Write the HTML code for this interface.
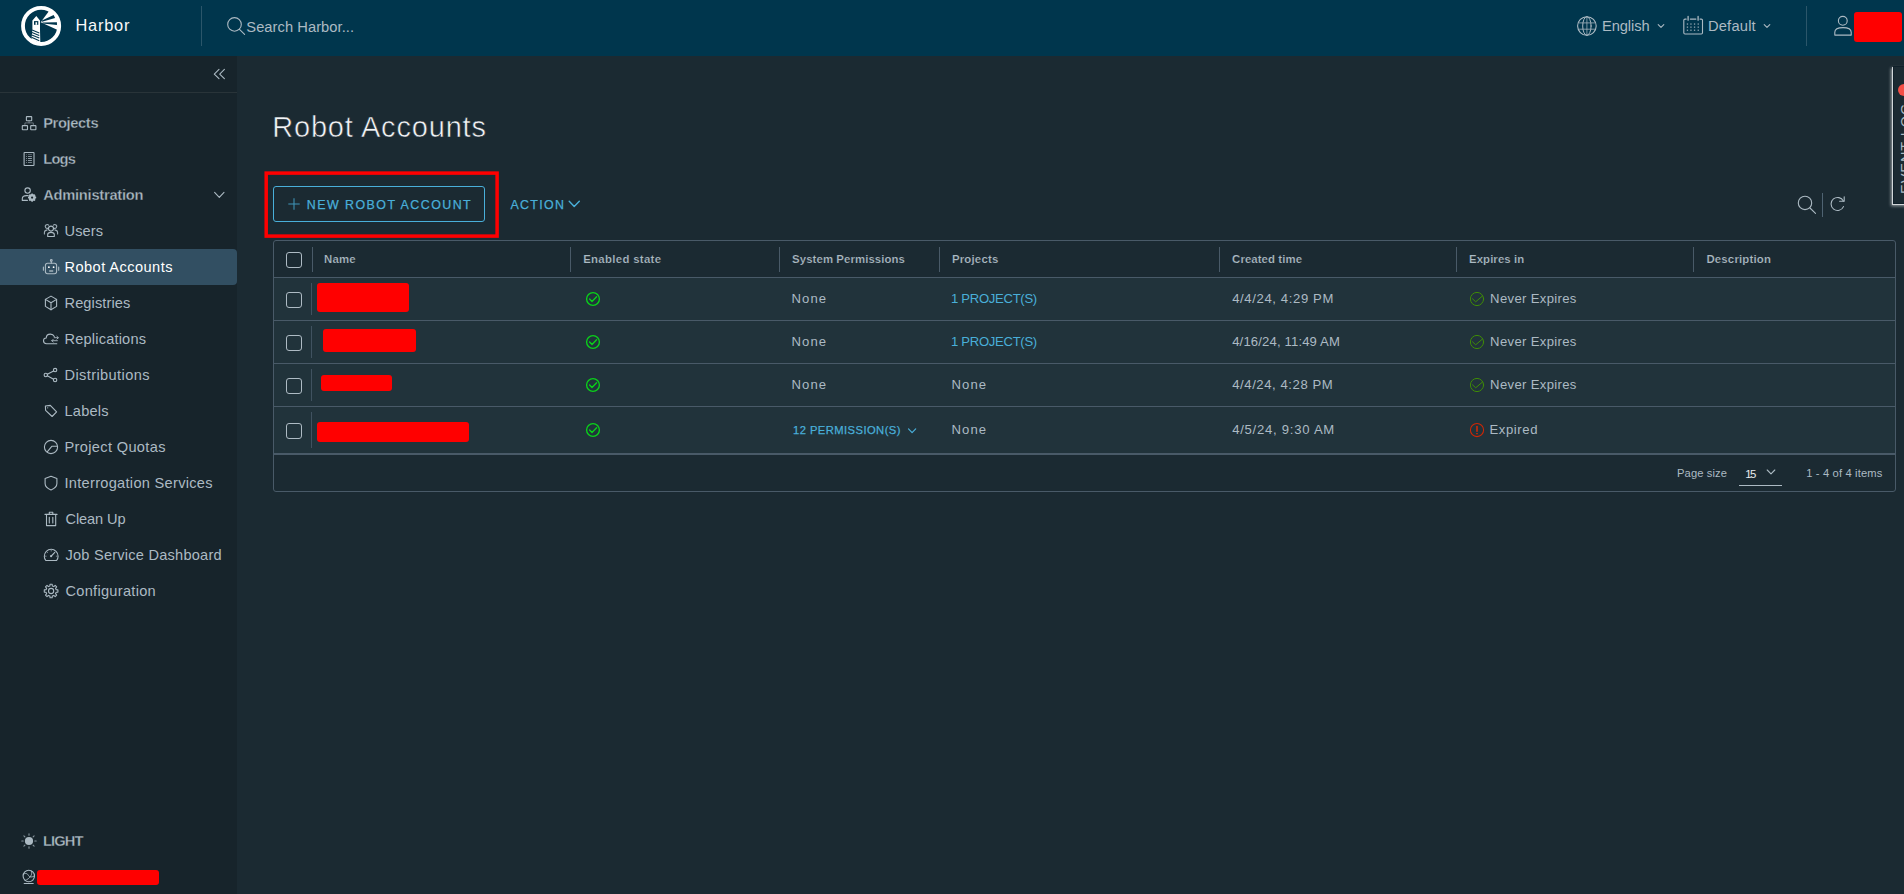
<!DOCTYPE html>
<html lang="en">
<head>
<meta charset="utf-8">
<title>Harbor - Robot Accounts</title>
<style>
*{box-sizing:border-box;margin:0;padding:0}
html,body{width:1904px;height:894px;overflow:hidden;background:#1b2a32;font-family:"Liberation Sans",sans-serif;color:#acbac3}
.abs{position:absolute}
.t{position:absolute;white-space:nowrap;line-height:1}
#header{position:absolute;left:0;top:0;width:1904px;height:56px;background:#00364d}
#sidebar{position:absolute;left:0;top:56px;width:237px;height:838px;background:#17242b}
#main{position:absolute;left:237px;top:56px;width:1667px;height:838px;background:#1b2a32}
svg{position:absolute;overflow:visible}
.red{position:absolute;background:#ff0000;border-radius:3px}
.cb{position:absolute;width:16px;height:16px;border:1px solid #aebbc4;border-radius:3px;background:transparent}
.sep{position:absolute;width:1px;background:#495a68}
.rs{background:#405260}
#title{-webkit-text-stroke:.55px #1b2a32}
#nv1,#nv2,#nv3,#light{-webkit-text-stroke:.3px #17242b}
#th1,#th2,#th3,#th4,#th5,#th6,#th7{-webkit-text-stroke:.2px #1b2a32}
#btntext,#action,#r4a{-webkit-text-stroke:.25px #49afd9}
.hl{position:absolute;height:1px;background:#495a68;left:274px;width:1621px}
.i{fill:none;stroke:#acbac3;stroke-width:1.1;stroke-linecap:round;stroke-linejoin:round}
</style>
</head>
<body>
<div id="header"></div>
<div id="sidebar"></div>
<div id="main"></div>

<!-- header pieces -->
<div class="abs" style="left:201px;top:6px;width:1px;height:40px;background:#2b566a"></div>
<div class="abs" style="left:1806px;top:6px;width:1px;height:40px;background:#2b566a"></div>
<div class="red" style="left:1854px;top:12px;width:48px;height:30px;border-radius:3px"></div>

<!-- sidebar pieces -->
<div class="abs" style="left:0;top:92px;width:237px;height:1px;background:#293439"></div>
<div class="abs" id="active" style="left:0;top:249px;width:237px;height:36px;background:#324f62;border-radius:0 4px 4px 0"></div>
<div class="red" style="left:37px;top:870px;width:122px;height:15px;border-radius:3px"></div>

<!-- toolbar -->
<svg style="left:0;top:0" width="1904" height="894"><rect x="266.2" y="173.1" width="230.9" height="63" fill="none" stroke="#ff0000" stroke-width="3.5"/></svg>
<div class="abs" id="btn" style="left:273px;top:186px;width:212px;height:36px;border:1px solid #49afd9;border-radius:3px"></div>

<!-- table -->
<div class="abs" id="table" style="left:273px;top:240px;width:1623px;height:252px;border:1px solid #495a68;border-radius:3px;background:#1b2a32"></div>
<div class="abs" id="rows" style="left:274px;top:278px;width:1621px;height:175px;background:#21333b"></div>
<div class="hl" style="top:277px"></div>
<div class="hl" style="top:320px"></div>
<div class="hl" style="top:363px"></div>
<div class="hl" style="top:406px"></div>
<div class="hl" style="top:453px;height:2px"></div>

<div class="cb" style="left:286px;top:252px"></div>
<div class="sep" style="left:312px;top:247px;height:25px"></div>
<div class="sep" style="left:570px;top:247px;height:25px"></div>
<div class="sep" style="left:779px;top:247px;height:25px"></div>
<div class="sep" style="left:939px;top:247px;height:25px"></div>
<div class="sep" style="left:1219px;top:247px;height:25px"></div>
<div class="sep" style="left:1456px;top:247px;height:25px"></div>
<div class="sep" style="left:1693px;top:247px;height:25px"></div>

<div class="cb" style="left:286px;top:292px"></div>
<div class="cb" style="left:286px;top:335px"></div>
<div class="cb" style="left:286px;top:378px"></div>
<div class="cb" style="left:286px;top:423px"></div>
<div class="sep rs" style="left:311px;top:283px;height:32px"></div>
<div class="sep rs" style="left:311px;top:326px;height:32px"></div>
<div class="sep rs" style="left:311px;top:369px;height:32px"></div>
<div class="sep rs" style="left:311px;top:412px;height:36px"></div>

<div class="red" style="left:317px;top:283px;width:92px;height:29px"></div>
<div class="red" style="left:323px;top:329px;width:93px;height:23px"></div>
<div class="red" style="left:321px;top:375px;width:71px;height:16px"></div>
<div class="red" style="left:317px;top:422px;width:152px;height:20px"></div>

<div class="abs" style="left:1739px;top:485px;width:43px;height:1px;background:#acbac3"></div>

<div class="t" id="brand" style="left:75.50px;top:17.02px;font-size:16.4px;color:#fafafa;letter-spacing:0.75px">Harbor</div>
<div class="t" id="search" style="left:246.30px;top:19.96px;font-size:14.7px;color:#acbac3;letter-spacing:0.05px">Search Harbor...</div>
<div class="t" id="lang" style="left:1602.00px;top:18.86px;font-size:14.7px;color:#acbac3;letter-spacing:-0.1px">English</div>
<div class="t" id="theme" style="left:1707.90px;top:18.86px;font-size:14.7px;color:#acbac3;letter-spacing:0.21px">Default</div>
<div class="t" id="nv1" style="left:43.20px;top:115.86px;font-size:14.7px;color:#acbac3;letter-spacing:-0.37px;font-weight:bold">Projects</div>
<div class="t" id="nv2" style="left:43.20px;top:151.86px;font-size:14.7px;color:#acbac3;letter-spacing:-0.77px;font-weight:bold">Logs</div>
<div class="t" id="nv3" style="left:43.20px;top:187.86px;font-size:14.7px;color:#acbac3;letter-spacing:-0.26px;font-weight:bold">Administration</div>
<div class="t" id="nv4" style="left:64.50px;top:223.94px;font-size:14.6px;color:#acbac3;letter-spacing:0.12px">Users</div>
<div class="t" id="nv5" style="left:64.50px;top:259.94px;font-size:14.6px;color:#ffffff;letter-spacing:0.44px">Robot Accounts</div>
<div class="t" id="nv6" style="left:64.50px;top:295.94px;font-size:14.6px;color:#acbac3;letter-spacing:0.1px">Registries</div>
<div class="t" id="nv7" style="left:64.50px;top:331.94px;font-size:14.6px;color:#acbac3;letter-spacing:0.18px">Replications</div>
<div class="t" id="nv8" style="left:64.50px;top:367.94px;font-size:14.6px;color:#acbac3;letter-spacing:0.39px">Distributions</div>
<div class="t" id="nv9" style="left:64.50px;top:403.94px;font-size:14.6px;color:#acbac3;letter-spacing:0.2px">Labels</div>
<div class="t" id="nv10" style="left:64.50px;top:439.94px;font-size:14.6px;color:#acbac3;letter-spacing:0.34px">Project Quotas</div>
<div class="t" id="nv11" style="left:64.50px;top:475.94px;font-size:14.6px;color:#acbac3;letter-spacing:0.29px">Interrogation Services</div>
<div class="t" id="nv12" style="left:65.50px;top:511.94px;font-size:14.6px;color:#acbac3;letter-spacing:-0.12px">Clean Up</div>
<div class="t" id="nv13" style="left:65.50px;top:547.94px;font-size:14.6px;color:#acbac3;letter-spacing:0.22px">Job Service Dashboard</div>
<div class="t" id="nv14" style="left:65.50px;top:583.94px;font-size:14.6px;color:#acbac3;letter-spacing:0.28px">Configuration</div>
<div class="t" id="light" style="left:43.10px;top:833.56px;font-size:14.7px;color:#acbac3;letter-spacing:-0.95px;font-weight:bold">LIGHT</div>
<div class="t" id="title" style="left:272.20px;top:112.75px;font-size:29.0px;color:#f2f4f6;letter-spacing:0.82px">Robot Accounts</div>
<div class="t" id="btntext" style="left:306.80px;top:198.80px;font-size:12.4px;color:#49afd9;letter-spacing:1.48px">NEW ROBOT ACCOUNT</div>
<div class="t" id="action" style="left:510.50px;top:198.80px;font-size:12.4px;color:#49afd9;letter-spacing:1.31px">ACTION</div>
<div class="t" id="th1" style="left:324.10px;top:253.65px;font-size:11.4px;color:#acbac3;letter-spacing:0.14px;font-weight:bold">Name</div>
<div class="t" id="th2" style="left:583.20px;top:253.65px;font-size:11.4px;color:#acbac3;letter-spacing:0.31px;font-weight:bold">Enabled state</div>
<div class="t" id="th3" style="left:792.10px;top:253.65px;font-size:11.4px;color:#acbac3;letter-spacing:0.08px;font-weight:bold">System Permissions</div>
<div class="t" id="th4" style="left:951.90px;top:253.65px;font-size:11.4px;color:#acbac3;letter-spacing:0.2px;font-weight:bold">Projects</div>
<div class="t" id="th5" style="left:1232.10px;top:253.65px;font-size:11.4px;color:#acbac3;letter-spacing:0.08px;font-weight:bold">Created time</div>
<div class="t" id="th6" style="left:1469.00px;top:253.65px;font-size:11.4px;color:#acbac3;letter-spacing:0.08px;font-weight:bold">Expires in</div>
<div class="t" id="th7" style="left:1706.40px;top:253.65px;font-size:11.4px;color:#acbac3;letter-spacing:0.19px;font-weight:bold">Description</div>
<div class="t" id="r1a" style="left:791.60px;top:292.11px;font-size:13.1px;color:#acbac3;letter-spacing:1.03px">None</div>
<div class="t" id="r2a" style="left:791.60px;top:335.11px;font-size:13.1px;color:#acbac3;letter-spacing:1.03px">None</div>
<div class="t" id="r3a" style="left:791.60px;top:378.11px;font-size:13.1px;color:#acbac3;letter-spacing:1.03px">None</div>
<div class="t" id="r4a" style="left:793.00px;top:424.92px;font-size:11.2px;color:#49afd9;letter-spacing:0.45px">12 PERMISSION(S)</div>
<div class="t" id="r1b" style="left:951.00px;top:292.11px;font-size:13.1px;color:#49afd9;letter-spacing:-0.3px">1 PROJECT(S)</div>
<div class="t" id="r2b" style="left:951.00px;top:335.11px;font-size:13.1px;color:#49afd9;letter-spacing:-0.3px">1 PROJECT(S)</div>
<div class="t" id="r3b" style="left:951.60px;top:378.11px;font-size:13.1px;color:#acbac3;letter-spacing:1.03px">None</div>
<div class="t" id="r4b" style="left:951.60px;top:423.11px;font-size:13.1px;color:#acbac3;letter-spacing:1.03px">None</div>
<div class="t" id="r1c" style="left:1232.20px;top:292.11px;font-size:13.1px;color:#acbac3;letter-spacing:0.62px">4/4/24, 4:29 PM</div>
<div class="t" id="r2c" style="left:1232.20px;top:335.11px;font-size:13.1px;color:#acbac3;letter-spacing:0.15px">4/16/24, 11:49 AM</div>
<div class="t" id="r3c" style="left:1232.20px;top:378.11px;font-size:13.1px;color:#acbac3;letter-spacing:0.58px">4/4/24, 4:28 PM</div>
<div class="t" id="r4c" style="left:1232.20px;top:423.11px;font-size:13.1px;color:#acbac3;letter-spacing:0.74px">4/5/24, 9:30 AM</div>
<div class="t" id="r1d" style="left:1490.10px;top:292.11px;font-size:13.1px;color:#acbac3;letter-spacing:0.34px">Never Expires</div>
<div class="t" id="r2d" style="left:1490.10px;top:335.11px;font-size:13.1px;color:#acbac3;letter-spacing:0.34px">Never Expires</div>
<div class="t" id="r3d" style="left:1490.10px;top:378.11px;font-size:13.1px;color:#acbac3;letter-spacing:0.34px">Never Expires</div>
<div class="t" id="r4d" style="left:1489.40px;top:423.11px;font-size:13.1px;color:#acbac3;letter-spacing:0.61px">Expired</div>
<div class="t" id="ps" style="left:1677.00px;top:467.92px;font-size:11.2px;color:#acbac3;letter-spacing:0.11px">Page size</div>
<div class="t" id="ps15" style="left:1745.20px;top:468.65px;font-size:11.4px;color:#e9ecef;letter-spacing:-1.53px">15</div>
<div class="t" id="items" style="left:1806.20px;top:467.92px;font-size:11.2px;color:#acbac3;letter-spacing:0.15px">1 - 4 of 4 items</div>

<svg id="icons" style="left:0;top:0" width="1904" height="894" viewBox="0 0 1904 894">
<!-- ===== Harbor logo ===== -->
<g transform="translate(21.1,5.9)">
  <circle cx="20" cy="20" r="18.1" fill="none" stroke="#fff" stroke-width="3.8"/>
  <!-- light wedge -->
  <path d="M19.6,16.3 L28.3,4.6 A18.5,18.5 0 0 1 36.6,24 Z" fill="#fff"/>
  <!-- dark rays -->
  <path d="M20.3,14.9 L32.5,9.2 L34,12 L20.9,15.9 Z" fill="#00364d"/>
  <path d="M21.4,16.7 L35.8,16.3 L35.9,19 L21.4,17.6 Z" fill="#00364d"/>
  <!-- lighthouse -->
  <path d="M15.2,10.2 L18.9,14.6 L18.9,23.6 L19.2,37 L10.3,34.2 L11.3,23.6 L11.3,14.6 Z" fill="#fff"/>
  <rect x="12.9" y="15.2" width="4.3" height="3.7" fill="#00364d"/>
  <rect x="14.4" y="16.3" width="1.6" height="2.6" fill="#fff"/>
  <!-- stripes -->
  <g stroke="#00364d" stroke-width="1.05">
    <path d="M11,24.2 L18.2,27.0"/><path d="M10.8,26.6 L18.2,29.6"/><path d="M10.6,29.0 L18.2,32.2"/><path d="M10.4,31.4 L18.2,34.8"/>
  </g>
</g>

<!-- ===== header search icon ===== -->
<circle cx="234.5" cy="24.4" r="6.8" class="i" stroke-width="1.2"/>
<path d="M239.5,29.4 L244.6,34.4" class="i" stroke-width="1.2"/>

<!-- ===== globe ===== -->
<g class="i" stroke-width="1.2">
  <circle cx="1586.9" cy="26" r="9.3"/>
  <ellipse cx="1586.9" cy="26" rx="4.2" ry="9.3" stroke-width="1"/>
  <path d="M1586.9,16.7 V35.3" stroke-width="1" opacity=".7"/>
  <path d="M1578.6,22.9 H1595.2 M1578.6,29.2 H1595.2" stroke-width="1" opacity=".75"/>
</g>
<path d="M1658.2,24.6 L1661,27.4 L1663.8,24.6" class="i" stroke-width="1.2"/>

<!-- ===== calendar ===== -->
<g class="i" stroke-width="1.2">
  <path d="M1686.2,19.1 H1685 Q1683.8,19.1 1683.8,20.3 V32.8 Q1683.8,34 1685,34 H1701.3 Q1702.5,34 1702.5,32.8 V20.3 Q1702.5,19.1 1701.3,19.1 H1700"/>
  <path d="M1690.3,19.1 H1695.9"/>
  <path d="M1688.1,16.4 V20.2 M1698.1,16.4 V20.2" stroke-width="1.3"/>
</g>
<g fill="#acbac3" opacity=".85">
  <rect x="1686.8" y="23.4" width="1.3" height="1.3"/><rect x="1690.3" y="23.4" width="1.3" height="1.3"/><rect x="1693.9" y="23.4" width="1.3" height="1.3"/><rect x="1697.6" y="23.4" width="1.3" height="1.3"/>
  <rect x="1686.8" y="26.5" width="1.3" height="1.3"/><rect x="1690.3" y="26.5" width="1.3" height="1.3"/><rect x="1693.9" y="26.5" width="1.3" height="1.3"/><rect x="1697.6" y="26.5" width="1.3" height="1.3"/>
  <rect x="1686.8" y="29.6" width="1.3" height="1.3"/><rect x="1690.3" y="29.6" width="1.3" height="1.3"/><rect x="1693.9" y="29.6" width="1.3" height="1.3"/><rect x="1697.6" y="29.6" width="1.3" height="1.3"/>
</g>
<path d="M1764.2,24.6 L1767,27.4 L1769.8,24.6" class="i" stroke-width="1.2"/>

<!-- ===== user ===== -->
<g class="i" stroke-width="1.35">
  <circle cx="1842.8" cy="20.8" r="4.4"/>
  <path d="M1834.8,35.1 V32.2 C1834.8,29 1839,27.6 1843,27.6 C1847,27.6 1851.2,29 1851.2,32.2 V35.1 Z"/>
</g>

<!-- ===== sidebar collapse ===== -->
<path d="M219,69.4 L214.3,74.05 L219,78.7 M224.4,69.4 L219.7,74.05 L224.4,78.7" class="i" stroke-width="1.2"/>
<!-- admin chevron -->
<path d="M214.6,192.3 L219.3,197.3 L224,192.3" class="i" stroke-width="1.3"/>

<!-- ===== Projects icon ===== -->
<g class="i" stroke-width="1.05">
  <rect x="26.4" y="116.6" width="5.3" height="4.1" rx=".5"/>
  <rect x="22.3" y="125.6" width="5.2" height="4.1" rx=".5"/>
  <rect x="30.7" y="125.6" width="5.2" height="4.1" rx=".5"/>
  <path d="M29.05,120.7 V122.9 M24.9,125.6 V122.9 H33.3 V125.6" stroke-width=".8" opacity=".65"/>
</g>
<!-- ===== Logs icon ===== -->
<g class="i" stroke-width="1.15">
  <rect x="24.1" y="152.5" width="9.9" height="13" rx=".5"/>
</g>
<g fill="#acbac3">
  <rect x="28" y="154.1" width="3.9" height=".9" opacity=".45"/><rect x="26.1" y="154.1" width=".9" height=".9" opacity=".4"/>
  <rect x="28" y="156" width="3.9" height=".9" opacity=".8"/><rect x="26.1" y="156" width=".9" height=".9" opacity=".75"/>
  <rect x="28" y="158.05" width="3.9" height=".9" opacity=".9"/><rect x="26.1" y="158.05" width=".9" height=".9" opacity=".8"/>
  <rect x="28" y="160.05" width="3.9" height=".9" opacity=".85"/><rect x="26.1" y="160.05" width=".9" height=".9" opacity=".8"/>
  <rect x="28" y="162" width="3.9" height=".9" opacity=".7"/><rect x="26.1" y="162" width=".9" height=".9" opacity=".65"/>
</g>
<!-- ===== Administration icon ===== -->
<g class="i" stroke-width="1.05">
  <circle cx="27.6" cy="190.6" r="2.7"/>
  <path d="M28.2,195.6 H26.5 C23.8,195.6 22.3,197 22.3,198.6 V200.4 H27.4"/>
</g>
<g>
  <circle cx="32.1" cy="197.6" r="2.6" fill="none" stroke="#acbac3" stroke-width="1.9"/>
  <g stroke="#acbac3" stroke-width="1.5" stroke-linecap="butt">
    <path d="M32.1,193.5 V201.7 M28,197.6 H36.2 M29.2,194.7 L35,200.5 M35,194.7 L29.2,200.5"/>
  </g>
  <circle cx="32.1" cy="197.6" r="1.1" fill="#17242b"/>
</g>

<!-- ===== Users icon ===== -->
<g class="i" stroke-width="1">
  <circle cx="51" cy="228.6" r="2.5"/>
  <path d="M47.7,236.5 V234.6 C47.7,233.2 49.2,232.4 51,232.4 C52.8,232.4 54.3,233.2 54.3,234.6 V236.5 Z"/>
  <path d="M48.3,228 A1.9,1.9 0 1 1 48.6,225.2" opacity=".9"/>
  <path d="M53.7,228 A1.9,1.9 0 1 0 53.4,225.2" opacity=".9"/>
  <path d="M44.4,234 V232.6 C44.4,231.2 45.4,230.2 47.2,229.9" opacity=".9"/>
  <path d="M57.6,234 V232.6 C57.6,231.2 56.6,230.2 54.8,229.9" opacity=".9"/>
</g>
<!-- ===== Robot icon (active, white) ===== -->
<g class="i" stroke="#ffffff" stroke-width="1.05">
  <rect x="45.4" y="263.3" width="11.2" height="10.4" rx="2.2"/>
  <path d="M51.3,263.3 V261.5"/>
  <circle cx="51.3" cy="260.5" r=".9"/>
  <path d="M43.4,267 V270.2 M58.7,267 V270.2"/>
  <path d="M49.2,271 H53.2" stroke-width="1.4" stroke-linecap="butt"/>
</g>
<circle cx="48.9" cy="267.2" r=".9" fill="#fff"/><circle cx="53.6" cy="267.2" r=".9" fill="#fff"/>
<!-- ===== Registries cube ===== -->
<g class="i" stroke-width="1">
  <path d="M51,296.1 L56.6,299.4 V306.4 L51,309.8 L45.4,306.4 V299.4 Z"/>
  <path d="M45.4,299.4 L51,302.8 L56.6,299.4 M51,302.8 V309.8"/>
</g>
<!-- ===== Replications (cloud traffic) ===== -->
<g class="i" stroke-width="1">
  <path d="M56.8,343.7 H46.6 C44.7,343.7 43.5,342.4 43.5,340.8 C43.5,339.2 44.7,338 46.2,338 C46.3,335.7 48.2,334.1 50.4,334.1 C52.2,334.1 53.6,335 54.3,336.4"/>
  <path d="M54.2,337.7 H58.2 M56.9,336.3 L58.3,337.7 L56.9,339.1" stroke-width=".9"/>
  <path d="M57.4,340.7 H51.8 M53.2,339.3 L51.8,340.7 L53.2,342.1" stroke-width=".9"/>
</g>
<!-- ===== Distributions (share) ===== -->
<g class="i" stroke-width="1">
  <circle cx="45.8" cy="375" r="1.7"/><circle cx="55.1" cy="370.1" r="1.7"/><circle cx="55.1" cy="380" r="1.7"/>
  <path d="M47.3,374.2 L53.6,370.9 M47.3,375.8 L53.6,379.2"/>
</g>
<!-- ===== Labels (tag) ===== -->
<g class="i" stroke-width="1">
  <path d="M45.4,406 L50.3,405.4 L56.6,411.9 L52.1,416.5 L45.6,410.3 Z"/>
</g>
<circle cx="47.7" cy="407.8" r=".6" fill="#acbac3"/>
<!-- ===== Project Quotas ===== -->
<g class="i" stroke-width="1">
  <circle cx="51" cy="447" r="6.6"/>
  <path d="M57.6,446.3 H51.8 L47.2,451.9" stroke-width="1.05"/>
</g>
<!-- ===== Interrogation (shield) ===== -->
<g class="i" stroke-width="1">
  <path d="M51,476.2 L56.9,478.6 V483.4 C56.9,486.4 54.2,488.6 51,489.9 C47.8,488.6 45.1,486.4 45.1,483.4 V478.6 Z"/>
</g>
<!-- ===== Clean Up (trash) ===== -->
<g class="i" stroke-width="1">
  <path d="M45,514.4 H57"/>
  <path d="M49.3,514.2 V512.3 H52.8 V514.2"/>
  <path d="M46.5,514.6 V525.6 H55.7 V514.6"/>
  <path d="M49.3,517.3 V523 M52.8,517.3 V523"/>
</g>
<!-- ===== Job Service Dashboard ===== -->
<g class="i" stroke-width="1">
  <path d="M45.8,560.5 C44.8,559.3 44.3,557.8 44.3,556.2 A6.9,6.9 0 0 1 58.1,556.2 C58.1,557.8 57.6,559.3 56.6,560.5 Z"/>
  <path d="M51.3,556 L54.8,552.4"/>
  <path d="M45.4,556.2 H46.2 M56.3,556.2 H57.1 M51.2,550.4 V551.1 M47.1,552.1 L47.6,552.6" stroke-width=".8" opacity=".8"/>
</g>
<circle cx="51.1" cy="556.2" r="1.1" fill="#acbac3"/>
<!-- ===== Configuration (gear) ===== -->
<g class="i" stroke-width="1">
  <circle cx="51.1" cy="591" r="2.6"/>
  <path d="M56.16,589.79 L57.92,589.92 L57.92,592.08 L56.16,592.21 L55.53,593.72 L56.68,595.06 L55.16,596.58 L53.82,595.43 L52.31,596.06 L52.18,597.82 L50.02,597.82 L49.89,596.06 L48.38,595.43 L47.04,596.58 L45.52,595.06 L46.67,593.72 L46.04,592.21 L44.28,592.08 L44.28,589.92 L46.04,589.79 L46.67,588.28 L45.52,586.94 L47.04,585.42 L48.38,586.57 L49.89,585.94 L50.02,584.18 L52.18,584.18 L52.31,585.94 L53.82,586.57 L55.16,585.42 L56.68,586.94 L55.53,588.28 Z" stroke-linejoin="round"/>
</g>
<!-- ===== LIGHT (sun) ===== -->
<circle cx="29" cy="841" r="4.1" fill="#acbac3"/>
<g stroke="#acbac3" stroke-width="1.1" stroke-linecap="round" opacity=".75">
  <path d="M29,833.8 V835.2 M29,846.8 V848.2 M21.8,841 H23.2 M34.8,841 H36.2 M23.9,835.9 L24.9,836.9 M33.1,845.1 L34.1,846.1 M23.9,846.1 L24.9,845.1 M33.1,836.9 L34.1,835.9"/>
</g>
<!-- ===== bottom world icon ===== -->
<g class="i" stroke-width="1">
  <circle cx="28.8" cy="876" r="5.7"/>
  <path d="M23.5,874.2 C25.5,872.6 27.6,873.6 28.4,875.4 C29.2,877.2 31.4,877.6 33.9,876.2" stroke-width=".9"/>
  <path d="M25.2,880.4 C27.2,879.8 29.6,878.2 31.2,875.2 C31.8,874 32,872.6 31.6,871.2" stroke-width=".9"/>
  <path d="M24.2,883.5 H33.2"/>
</g>

<!-- ===== toolbar: plus ===== -->
<path d="M294,198.3 V209.7 M288.3,204 H299.7" stroke="#49afd9" stroke-width="1.05" fill="none" opacity=".8"/>
<!-- action chevron -->
<path d="M569.2,201.3 L574.2,206.6 L579.3,201.3" stroke="#49afd9" stroke-width="1.4" fill="none" stroke-linecap="round" stroke-linejoin="round"/>
<!-- toolbar search & refresh -->
<circle cx="1805" cy="202.9" r="6.7" class="i" stroke-width="1.25"/>
<path d="M1810,208 L1815.5,213.3" class="i" stroke-width="1.25"/>
<rect x="1822" y="193" width="1" height="24" fill="#4f6372"/>
<path d="M1843.4,201.1 A6.5,6.5 0 1 0 1843.5,206.6" class="i" stroke-width="1.25"/>
<path d="M1844.2,196.8 V201.3 H1839.6" class="i" stroke-width="1.25"/>

<!-- ===== enabled-state icons ===== -->
<g fill="none" stroke="#0ad21a" stroke-width="1.35" stroke-linecap="round" stroke-linejoin="round">
  <circle cx="593" cy="299" r="6.4"/><path d="M589.6,299 L592,301.5 L596.6,296.7"/>
  <circle cx="593" cy="342" r="6.4"/><path d="M589.6,342 L592,344.5 L596.6,339.7"/>
  <circle cx="593" cy="385" r="6.4"/><path d="M589.6,385 L592,387.5 L596.6,382.7"/>
  <circle cx="593" cy="430" r="6.4"/><path d="M589.6,430 L592,432.5 L596.6,427.7"/>
</g>
<!-- ===== never-expires icons ===== -->
<g fill="none" stroke="#3f8c06" stroke-width="1" stroke-linecap="round" stroke-linejoin="round">
  <circle cx="1477" cy="299" r="6.6"/><path d="M1472.5,298.8 L1475.7,301.8 L1482.6,295.9"/>
  <circle cx="1477" cy="342" r="6.6"/><path d="M1472.5,341.8 L1475.7,344.8 L1482.6,338.9"/>
  <circle cx="1477" cy="385" r="6.6"/><path d="M1472.5,384.8 L1475.7,387.8 L1482.6,381.9"/>
</g>
<!-- expired -->
<g>
  <circle cx="1477" cy="430" r="6.6" fill="none" stroke="#d12705" stroke-width="1.05"/>
  <rect x="1476.2" y="425.8" width="1.6" height="6.1" rx=".7" fill="#d12705"/>
  <rect x="1476.1" y="433" width="1.8" height="1.3" rx=".5" fill="#d12705"/>
</g>
<!-- permission chevron -->
<path d="M908.5,428.9 L912.1,432.6 L915.7,428.9" stroke="#49afd9" stroke-width="1.2" fill="none" stroke-linecap="round" stroke-linejoin="round"/>
<!-- page size chevron -->
<path d="M1767.2,470 L1771,473.8 L1774.8,470" class="i" stroke-width="1.2"/>
</svg>

<!-- ===== EVENT LOG tab ===== -->
<div class="abs" id="evwrap" style="left:1874px;top:56px;width:30px;height:170px;overflow:hidden">
  <div class="abs" style="left:19px;top:10px;width:30px;height:138px;background:#1b2a32;border:1px solid #10202a;box-shadow:-1px 1px 0 0 rgba(225,228,230,.85),-2px 2px 3px 0 rgba(255,255,255,.55)"></div>
  <div class="t" id="evlog" style="left:24.9px;top:138.3px;font-size:14.6px;letter-spacing:.9px;color:#acbac3;transform-origin:0 0;transform:rotate(-90deg)">EVENT LOG</div>
  <div class="abs" style="left:24px;top:27.5px;width:12px;height:12px;border-radius:6px;background:#f54f47"></div>
</div>

</body>
</html>
